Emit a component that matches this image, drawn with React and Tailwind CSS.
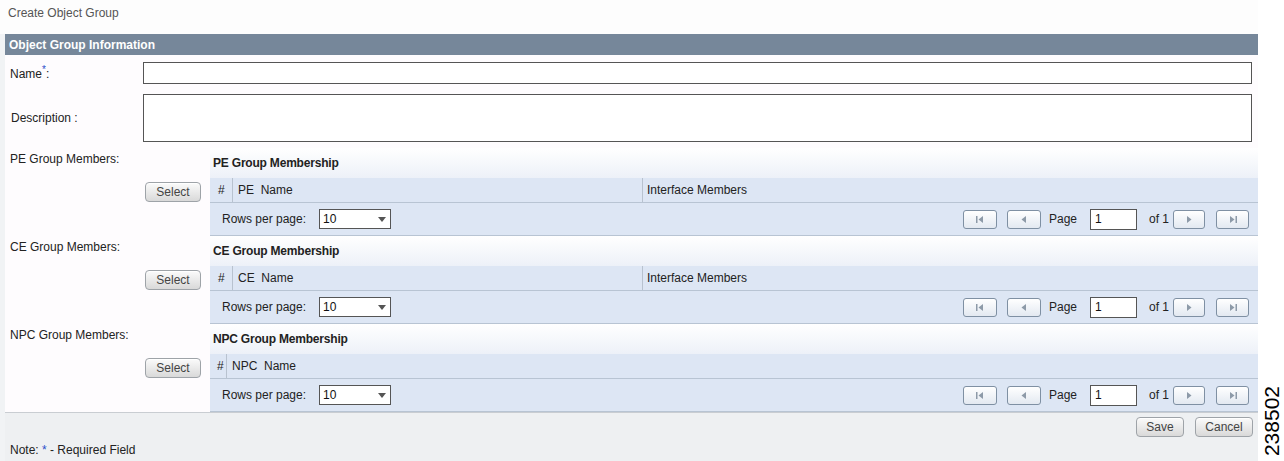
import React from "react";

const FONT = "font-['Liberation_Sans',Arial,sans-serif]";

function Tri({ dir = "left", bar = false }) {
  // small gray triangle, optionally with a bar (first / last page)
  const left = dir === "left";
  return (
    <svg width="12" height="9" viewBox="0 0 12 9">
      {bar && left && <rect x="2" y="1" width="1.5" height="7" fill="#8d9aa8" />}
      {bar && !left && <rect x="8.5" y="1" width="1.5" height="7" fill="#8d9aa8" />}
      {left ? (
        <polygon points={bar ? "9,1 4.5,4.5 9,8" : "8,1 3.5,4.5 8,8"} fill="#8d9aa8" />
      ) : (
        <polygon points={bar ? "3,1 7.5,4.5 3,8" : "4,1 8.5,4.5 4,8"} fill="#8d9aa8" />
      )}
    </svg>
  );
}

function PageBtn({ w, children }) {
  return (
    <button
      className={`${w} h-[19px] flex items-center justify-center rounded-[3px] border border-[#7f90a3] bg-gradient-to-b from-white to-[#e3e9f1]`}
    >
      {children}
    </button>
  );
}

function GrayBtn({ w, label }) {
  return (
    <button
      className={`${w} h-[20px] rounded-[4px] border border-[#9ea3a8] bg-gradient-to-b from-[#fbfbfb] to-[#d9d9d9] text-[12px] leading-none text-[#444] shadow-[inset_0_1px_0_#fff]`}
    >
      {label}
    </button>
  );
}

function Pager() {
  return (
    <div className="h-[33px] flex items-center border-b border-[#b8c4d3] bg-[#dde6f4] pl-[12px] pr-[9px]">
      <span className="text-[12px] text-[#222]">Rows per page:</span>
      <div className="ml-[13px] w-[72px] h-[20px] flex items-center justify-between border border-[#555] bg-white pl-[3px] pr-[4px]">
        <span className="text-[12px] text-[#111]">10</span>
        <svg width="8" height="5" viewBox="0 0 8 5">
          <polygon points="0,0 8,0 4,5" fill="#555" />
        </svg>
      </div>
      <div className="ml-auto flex items-center">
        <PageBtn w="w-[34px]">
          <Tri dir="left" bar />
        </PageBtn>
        <div className="w-[10px]" />
        <PageBtn w="w-[34px]">
          <Tri dir="left" />
        </PageBtn>
        <span className="ml-[8px] text-[12px] text-[#222]">Page</span>
        <div className="ml-[13px] w-[47px] h-[21px] flex items-center border border-[#555] bg-white pl-[4px] text-[12px] text-[#111]">
          1
        </div>
        <span className="ml-[12px] text-[12px] text-[#222]">of 1</span>
        <div className="w-[4px]" />
        <PageBtn w="w-[32px]">
          <Tri dir="right" />
        </PageBtn>
        <div className="w-[11px]" />
        <PageBtn w="w-[33px]">
          <Tri dir="right" bar />
        </PageBtn>
      </div>
    </div>
  );
}

function MemberSection({ label, title, prefix, wideHash, interfaces }) {
  return (
    <div className="flex">
      <div className="w-[205px] flex flex-col">
        <div className="pl-[5px] pt-[4px] h-[18px] text-[12px] leading-[14px] text-[#222]">{label}</div>
        <div className="mt-[16px] flex justify-end pr-[9px]">
          <GrayBtn w="w-[56px]" label="Select" />
        </div>
      </div>
      <div className="w-[1048px]">
        <div className="h-[30px] flex items-center pl-[3px] bg-gradient-to-b from-white to-[#edf1f8] text-[12px] font-bold tracking-[-0.2px] text-[#222]">
          {title}
        </div>
        <div className="h-[25px] flex items-stretch border-b border-[#b8c4d3] bg-[#dde6f4] text-[12px] text-[#222]">
          <div className={`${wideHash ? "w-[23px] pl-[8px]" : "w-[17px] pl-[7px]"} flex items-center border-r border-[#b8c2cf]`}>#</div>
          <div className={`${interfaces ? "w-[410px] border-r border-[#b8c2cf]" : "flex-1"} flex items-center pl-[5px]`}>
            {prefix}&nbsp; Name
          </div>
          {interfaces && <div className="flex-1 flex items-center pl-[4px]">Interface Members</div>}
        </div>
        <Pager />
      </div>
    </div>
  );
}

export default function App() {
  return (
    <div className={`w-[1284px] h-[461px] overflow-hidden bg-[#fdfdfd] flex ${FONT}`}>
      <div className="w-[1258px] flex flex-col">
        <div className="h-[34px] pl-[8px] pt-[4px] text-[12px] text-[#555]">Create Object Group</div>
        <div className="flex-1 flex flex-col bg-[#f1f3f5] pl-[5px]">
          <div className="h-[21px] flex items-center pl-[4px] bg-[#76879a] text-[12px] font-bold text-white">
            Object Group Information
          </div>
          <div className="bg-[#fefcfe] pt-[7px]">
            <div className="flex items-center">
              <div className="w-[138px] pl-[5px] pt-[2px] text-[12px] text-[#222]">
                Name<sup className="text-[#2b4fc9] text-[10px]">*</sup>:
              </div>
              <div className="w-[1109px] h-[22px] border border-[#555] bg-white" />
            </div>
            <div className="mt-[10px] flex items-center">
              <div className="w-[138px] pl-[6px] text-[12px] text-[#222]">Description :</div>
              <div className="w-[1109px] h-[48px] border border-[#555] bg-white" />
            </div>
            <div className="mt-[6px] flex flex-col">
              <MemberSection label="PE Group Members:" title="PE Group Membership" prefix="PE" wideHash interfaces />
              <MemberSection label="CE Group Members:" title="CE Group Membership" prefix="CE" wideHash interfaces />
              <MemberSection label="NPC Group Members:" title="NPC Group Membership" prefix="NPC" />
            </div>
          </div>
          <div className="flex-1 border-t border-[#c9cdd2] bg-[#eef0f2] flex flex-col">
            <div className="flex justify-end gap-[11px] pr-[5px] pt-[4px]">
              <GrayBtn w="w-[48px]" label="Save" />
              <GrayBtn w="w-[58px]" label="Cancel" />
            </div>
            <div className="mt-auto mb-[2px] pl-[5px] text-[12px] text-[#222]">
              Note: <span className="text-[#2b4fc9]">*</span> - Required Field
            </div>
          </div>
        </div>
      </div>
      <div className="flex-1 flex items-end justify-center pb-[5px] bg-white">
        <span className="[writing-mode:vertical-rl] rotate-180 text-[21px] leading-none text-black">238502</span>
      </div>
    </div>
  );
}
